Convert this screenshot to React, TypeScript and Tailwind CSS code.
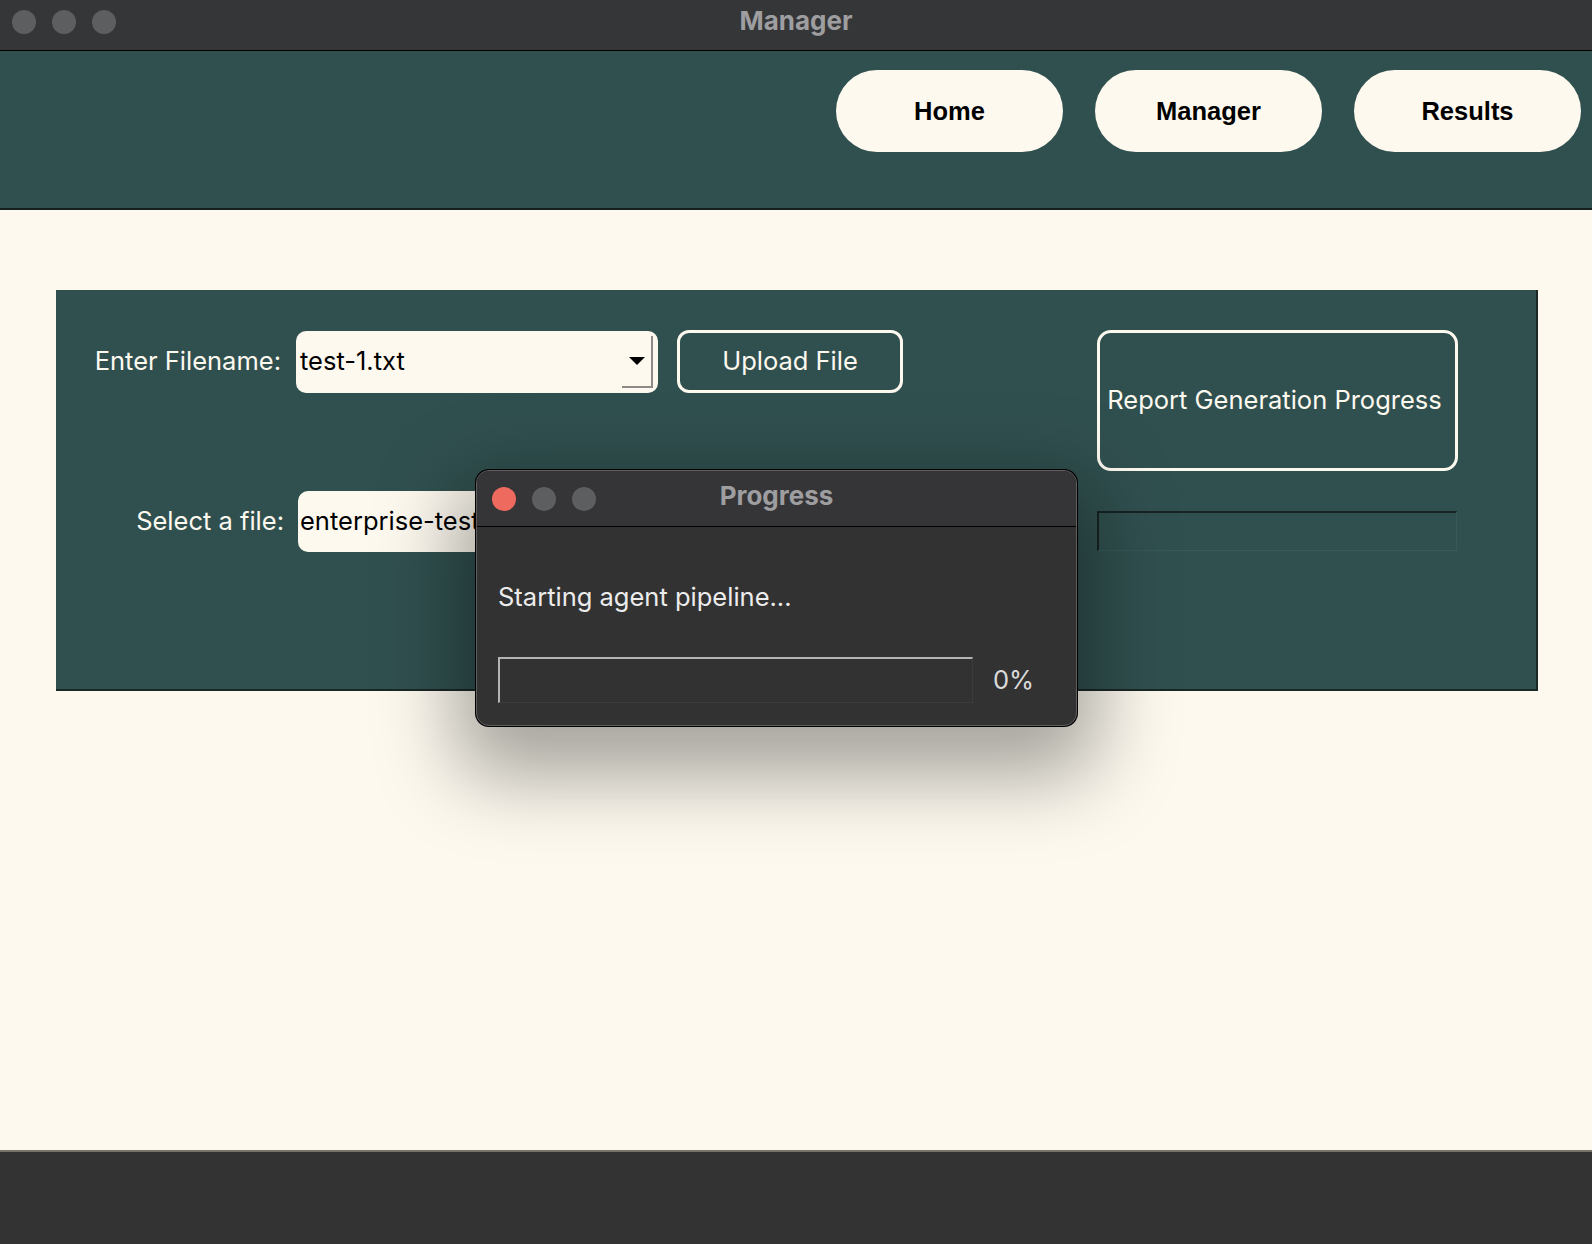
import React from "react";

function Lights({ first }: { first: string }) {
  return (
    <div className="flex items-center gap-[16px]">
      <span className={`block w-[24px] h-[24px] rounded-full ${first}`} />
      <span className="block w-[24px] h-[24px] rounded-full bg-[#5d5e60]" />
      <span className="block w-[24px] h-[24px] rounded-full bg-[#5d5e60]" />
    </div>
  );
}

function NavButton({ label }: { label: string }) {
  return (
    <button className="w-[227px] h-[82px] rounded-full bg-[#fdf9ef] text-black text-[25.5px] font-bold font-['Liberation_Sans',sans-serif]">
      {label}
    </button>
  );
}

export default function App() {
  return (
    <div className="relative w-[1592px] h-[1244px] overflow-hidden flex flex-col bg-[#fdf9ef] font-['Inter',sans-serif]">
      {/* window title bar */}
      <div className="relative h-[51px] shrink-0 bg-[#353638] border-b border-black flex items-start pt-[10px] pl-[12px]">
        <Lights first="bg-[#5d5e60]" />
        <div className="absolute inset-x-0 top-[5px] text-center text-[26px] leading-[32px] font-bold text-[#9e9ea0]">
          Manager
        </div>
      </div>

      {/* nav header */}
      <div className="h-[159px] shrink-0 bg-[#30504f] border-b-2 border-[#15201f] flex justify-end items-start gap-[32px] pt-[19px] pr-[11px]">
        <NavButton label="Home" />
        <NavButton label="Manager" />
        <NavButton label="Results" />
      </div>

      {/* main area */}
      <div className="flex-1 pt-[80px] pl-[56px]">
        <div className="w-[1482px] h-[401px] bg-[#30504f] border-r-2 border-b-2 border-[#1a2826] flex justify-between pt-[40px] pr-[78px]">
          <div className="flex flex-col gap-[98px]">
            <div className="flex items-center">
              <span className="w-[226px] pr-[1px] text-right text-[25.5px] text-[#fdf9ef]">Enter Filename:</span>
              <div className="ml-[14px] w-[362px] h-[62px] rounded-[10px] bg-[#fdf9ef] flex items-center pl-[4px] pr-[5px]">
                <span className="flex-1 text-[25.5px] text-black">test-1.txt</span>
                <div className="w-[31px] h-[52px] border-r-2 border-b-2 border-[#8c8a84] flex items-center justify-center">
                  <svg width="16" height="8" viewBox="0 0 16 8">
                    <polygon points="0,0 16,0 8,8" fill="#000" />
                  </svg>
                </div>
              </div>
              <button className="ml-[19px] w-[226px] h-[63px] rounded-[12px] border-[3px] border-[#fdf9ef] text-[25.5px] text-[#fdf9ef]">
                Upload File
              </button>
            </div>
            <div className="flex items-center">
              <span className="w-[228px] text-right text-[25.5px] text-[#fdf9ef]">Select a file:</span>
              <div className="ml-[14px] w-[362px] h-[61px] rounded-[10px] bg-[#fdf9ef] flex items-center pl-[2px]">
                <span className="text-[25.5px] text-black whitespace-nowrap overflow-hidden">enterprise-test-1.txt</span>
              </div>
            </div>
          </div>

          <div className="flex flex-col gap-[40px] pl-[2px]">
            <div className="w-[361px] h-[141px] rounded-[14px] border-[3px] border-[#fdf9ef] flex items-center justify-center pr-[6px] text-[25.5px] text-[#fdf9ef] whitespace-nowrap">
              Report Generation Progress
            </div>
            <div className="w-[360px] h-[40px] border-t-2 border-l-2 border-[#172423] border-r border-b border-r-[#36595b] border-b-[#36595b]" />
          </div>
        </div>
      </div>

      {/* bottom bar */}
      <div className="h-[94px] shrink-0 bg-[#333333] border-t-2 border-[#78746c]" />

      {/* progress dialog */}
      <div className="absolute left-[476px] top-[470px] w-[601px] h-[256px] rounded-[13px] bg-[#323232] border border-[#5f5f60] ring-1 ring-black shadow-[0_30px_80px_20px_rgba(0,0,0,0.35)] overflow-hidden flex flex-col">
        <div className="relative h-[56px] shrink-0 bg-[#353537] border-b border-black flex items-center pl-[15px]">
          <Lights first="bg-[#ee6a5e]" />
          <div className="absolute inset-x-0 top-[9px] text-center text-[26px] leading-[32px] font-bold text-[#9e9ea0]">
            Progress
          </div>
        </div>
        <div className="flex-1 pl-[21px] pt-[55px]">
          <div className="text-[25.5px] text-[#ececec] leading-[30px]">Starting agent pipeline...</div>
          <div className="mt-[45px] flex items-center">
            <div className="w-[475px] h-[46px] border-t-2 border-l-2 border-[#b4b4b4] border-r border-b border-r-[#3c3c3c] border-b-[#3c3c3c]" />
            <span className="ml-[20px] text-[25.5px] text-[#dadada]">0%</span>
          </div>
        </div>
      </div>
    </div>
  );
}
